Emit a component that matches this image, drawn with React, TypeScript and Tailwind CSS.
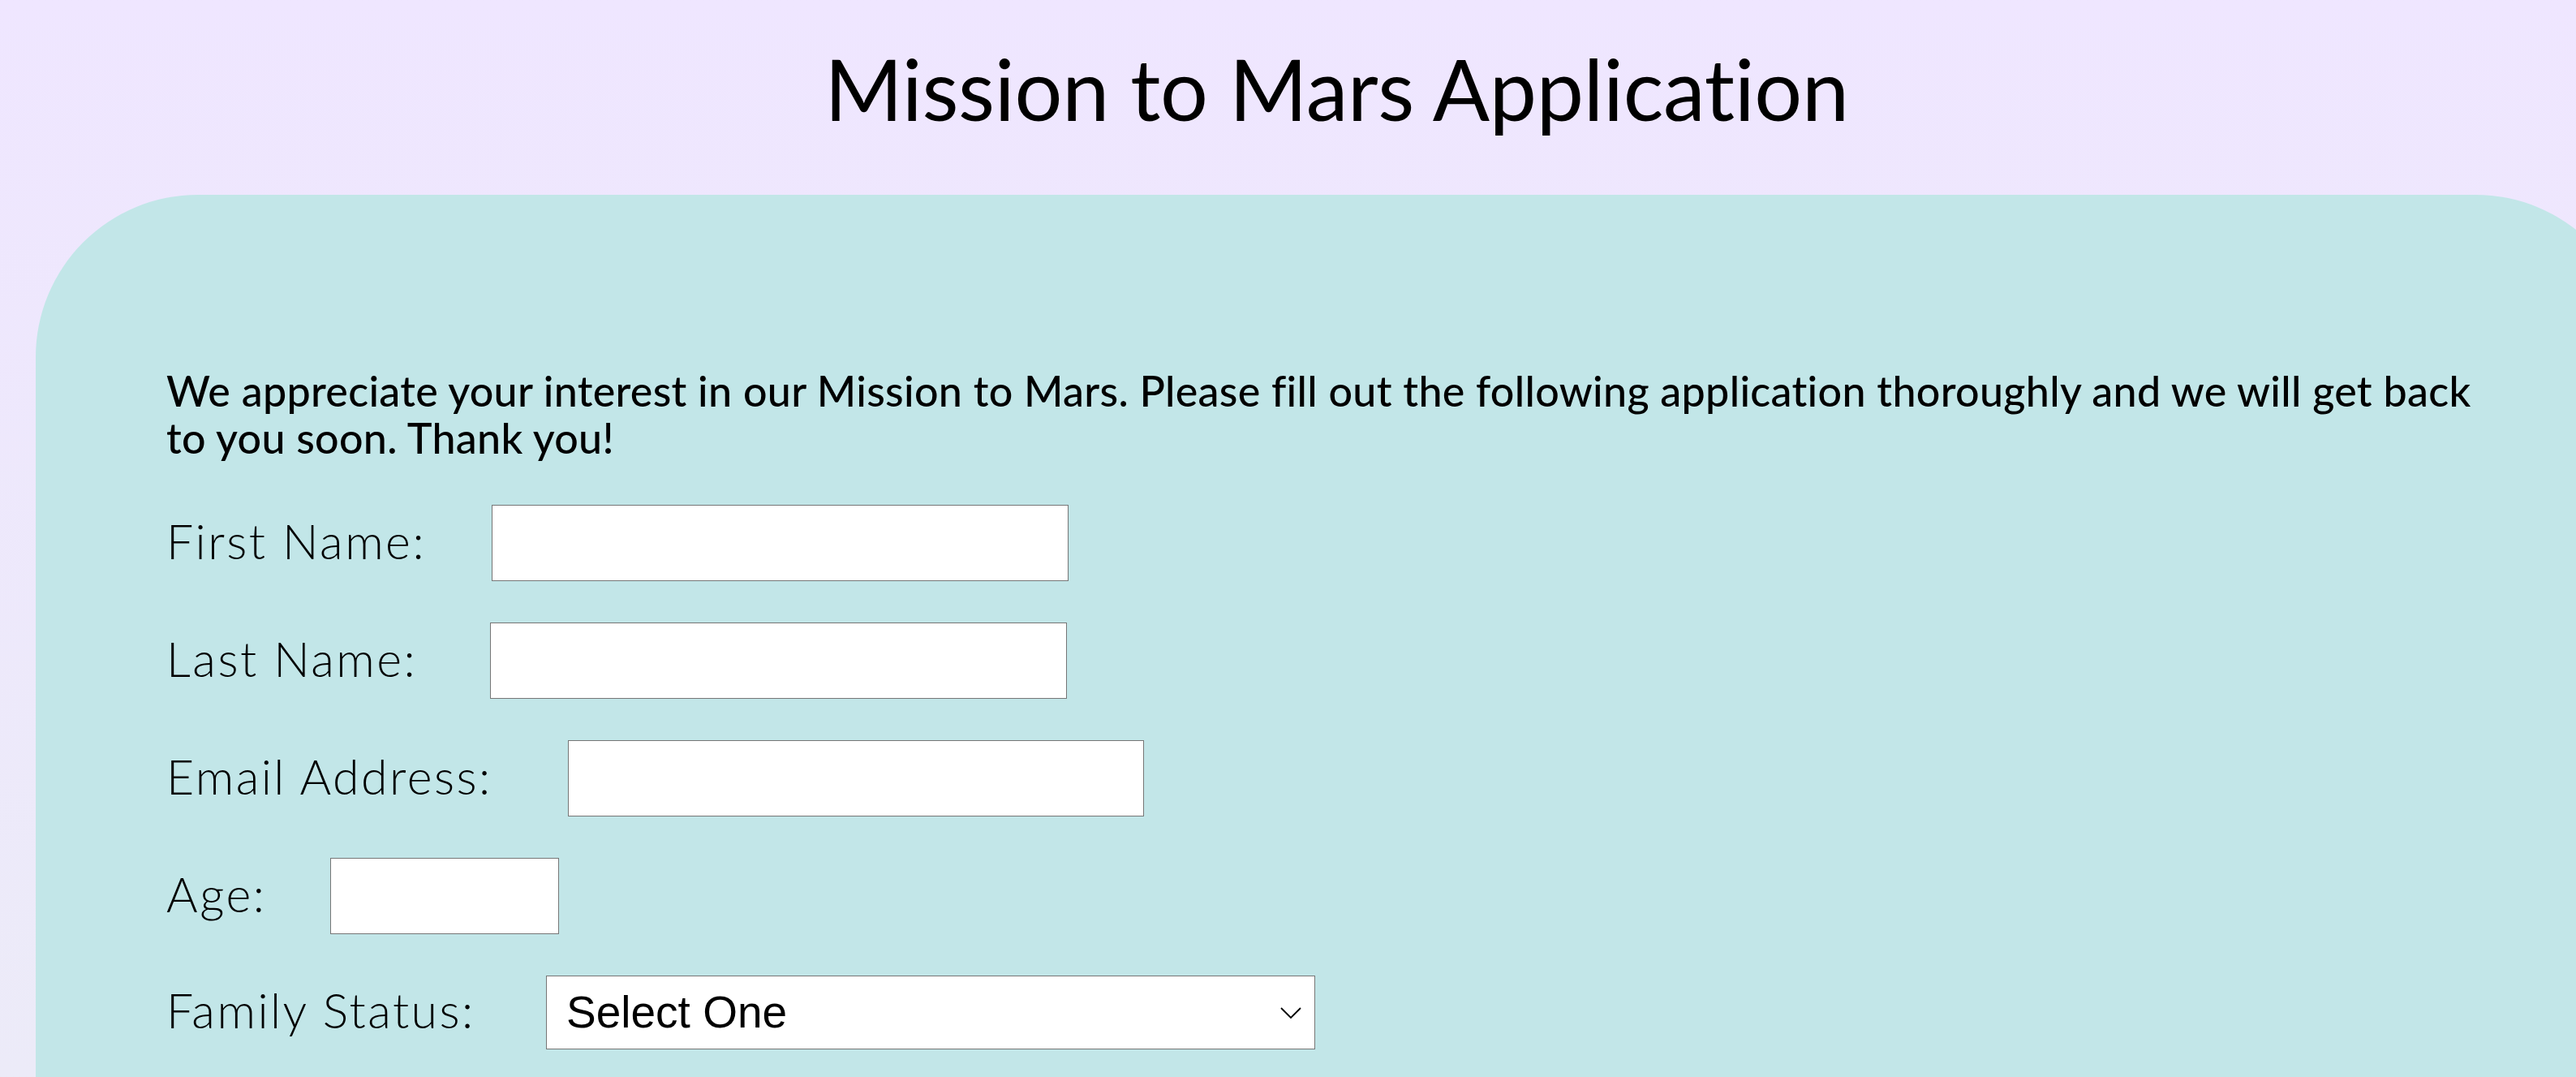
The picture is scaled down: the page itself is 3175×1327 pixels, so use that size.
import React from "react";

const labelCls =
  "inline-block shrink-0 font-['Lato',sans-serif] font-light text-[59px] leading-none tracking-[2.5px] text-black pb-[6px] whitespace-nowrap";
const inputCls =
  "ml-[80px] h-[94px] bg-white border border-[#767676] outline-none px-3 text-[40px] font-['Liberation_Sans',Arial,sans-serif]";

function Row({ label, labelW, children }: { label: string; labelW: string; children: React.ReactNode }) {
  return (
    <div className="flex items-center">
      <label className={`${labelCls} ${labelW}`}>{label}</label>
      {children}
    </div>
  );
}

export default function App() {
  return (
    <div className="h-screen w-full overflow-hidden bg-linear-to-b from-[#efe6ff] to-[#ecebf8]">
      <div className="ml-[44px] w-[3207px]">
        <h1 className="pt-[57px] mb-[79px] text-center font-['Lato',sans-serif] text-[104px] font-normal leading-none tracking-[-0.3px] text-black">
          Mission to Mars Application
        </h1>
        <div className="min-h-[1300px] rounded-[200px] bg-[#c2e6e8] pl-[161px] pr-[160px] pt-[212px]">
          <p className="font-['Lato',sans-serif] text-[52px] font-medium leading-[58px] tracking-[0.3px] text-black">
            We appreciate your interest in our Mission to Mars. Please fill out the following application thoroughly and we will get back to you soon. Thank you!
          </p>
          <form className="mt-[54px] flex flex-col gap-[51px]">
            <Row label="First Name:" labelW="w-[321px]">
              <input type="text" className={`${inputCls} w-[711px]`} />
            </Row>
            <Row label="Last Name:" labelW="w-[319px]">
              <input type="text" className={`${inputCls} w-[711px]`} />
            </Row>
            <Row label="Email Address:" labelW="w-[415px]">
              <input type="email" className={`${inputCls} w-[710px]`} />
            </Row>
            <Row label="Age:" labelW="w-[122px]">
              <input type="text" className={`${inputCls} w-[282px]`} />
            </Row>
            <Row label="Family Status:" labelW="w-[388px]">
              <div className="relative ml-[80px]">
                <select
                  defaultValue=""
                  className="h-[91px] w-[948px] appearance-none rounded-none border border-[#767676] bg-white pl-[24px] pr-[60px] font-['Liberation_Sans',Arial,sans-serif] text-[55px] text-black outline-none"
                >
                  <option value="">Select One</option>
                  <option value="single">Single</option>
                  <option value="married">Married</option>
                  <option value="family">Married with children</option>
                </select>
                <svg
                  className="pointer-events-none absolute right-[17px] top-1/2 -translate-y-1/2"
                  width="26"
                  height="15"
                  viewBox="0 0 26 15"
                  fill="none"
                >
                  <polyline points="1,1.5 13,13.5 25,1.5" stroke="#000" strokeWidth="1.8" />
                </svg>
              </div>
            </Row>
          </form>
        </div>
      </div>
    </div>
  );
}
